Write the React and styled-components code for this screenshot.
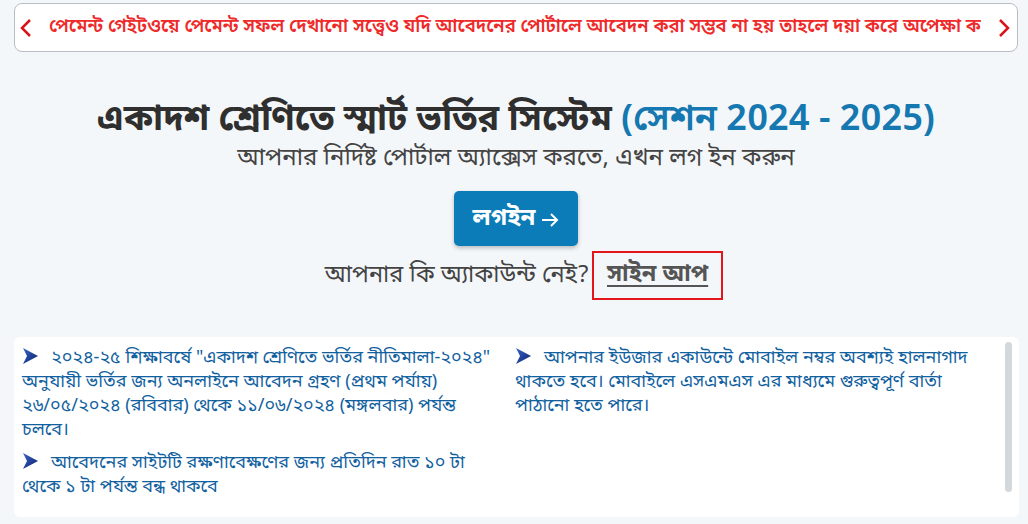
import React from "react";
import styled, { createGlobalStyle } from "styled-components";

const GlobalStyle = createGlobalStyle`
  * { box-sizing: border-box; }
  html, body { margin: 0; padding: 0; background: #f4f7fa; }
  body {
    font-family: "Noto Sans Bengali", "Noto Sans", "Open Sans", sans-serif;
    color: #333;
  }
`;

const Page = styled.div`
  width: 1028px;
  height: 524px;
  overflow: hidden;
  padding: 3px 10px 0 14px;
`;

const Ticker = styled.div`
  display: flex;
  align-items: center;
  height: 49px;
  border: 1px solid #b9bec4;
  border-radius: 8px;
  background: #fff;
  padding: 0 6px 0 4px;
  gap: 16px;
`;

const Chevron = styled.span`
  flex: none;
  display: flex;
  align-items: center;
`;

const TickerText = styled.div`
  flex: 1;
  overflow: hidden;
  white-space: nowrap;
  color: #ee2a2a;
  font-weight: 600;
  font-size: 18.5px;
`;

const Hero = styled.section`
  display: flex;
  flex-direction: column;
  align-items: center;
  padding-top: 46px;
`;

const Title = styled.h1`
  margin: 0;
  font-size: 36px;
  font-weight: 700;
  color: #2f2f2f;
  line-height: 46px;
  span { color: #1678b0; font-weight: 600; }
`;

const Subtitle = styled.p`
  margin: 0;
  font-size: 24px;
  color: #444;
  line-height: 30px;
`;

const LoginButton = styled.button`
  margin-top: 17px;
  width: 124px;
  height: 55px;
  border: none;
  border-radius: 5px;
  background: #0b7cb7;
  color: #fff;
  font-family: inherit;
  font-size: 24px;
  font-weight: 700;
  box-shadow: 0 2px 4px rgba(0, 0, 0, 0.25);
  display: flex;
  align-items: center;
  justify-content: center;
  gap: 6px;
  svg { margin-top: 2px; }
`;

const SignupLine = styled.div`
  margin-top: 5px;
  display: flex;
  align-items: center;
  font-size: 23.5px;
  color: #444;
  padding-left: 16px;
`;

const SignupLink = styled.a`
  margin-left: 3px;
  padding: 6px 13px 7px;
  border: 2px solid #e3161c;
  color: #555;
  font-weight: 700;
  text-decoration: underline;
  text-underline-offset: 4px;
`;

const NoticeCard = styled.div`
  margin-top: 37px;
  margin-right: -1px;
  height: 180px;
  background: #fff;
  border-radius: 6px;
  display: grid;
  grid-template-columns: 493px 1fr 14px;
  padding: 9px 0 0 8px;
`;

const Column = styled.div`
  padding-right: 14px;
`;

const Notice = styled.p`
  margin: 0 0 9px;
  font-size: 18px;
  line-height: 24px;
  color: #11619f;
  svg { vertical-align: -2px; margin-right: 12px; }
`;

const Scrollbar = styled.div`
  width: 7px;
  height: 150px;
  margin-top: -4px;
  border-radius: 4px;
  background: #d3d8dc;
  justify-self: start;
`;

function Arrow() {
  return (
    <svg width="17" height="18" viewBox="0 0 17 18">
      <defs>
        <linearGradient id="ag" x1="0" y1="0" x2="1" y2="1">
          <stop offset="0" stopColor="#3a66c9" />
          <stop offset="1" stopColor="#0b1f6b" />
        </linearGradient>
      </defs>
      <path d="M1 1 L16 9 L1 17 L5 9 Z" fill="url(#ag)" />
    </svg>
  );
}

export default function App() {
  return (
    <>
      <GlobalStyle />
      <Page>
        <Ticker>
          <Chevron>
            <svg width="14" height="20" viewBox="0 0 14 20"><path d="M11 2 L3 10 L11 18" stroke="#d8151b" strokeWidth="2.5" fill="none" /></svg>
          </Chevron>
          <TickerText>
            পেমেন্ট গেইটওয়ে পেমেন্ট সফল দেখানো সত্ত্বেও যদি আবেদনের পোর্টালে আবেদন করা সম্ভব না হয় তাহলে দয়া করে অপেক্ষা করুন
          </TickerText>
          <Chevron>
            <svg width="14" height="20" viewBox="0 0 14 20"><path d="M3 2 L11 10 L3 18" stroke="#d8151b" strokeWidth="2.5" fill="none" /></svg>
          </Chevron>
        </Ticker>

        <Hero>
          <Title>
            একাদশ শ্রেণিতে স্মার্ট ভর্তির সিস্টেম <span>(সেশন 2024 - 2025)</span>
          </Title>
          <Subtitle>আপনার নির্দিষ্ট পোর্টাল অ্যাক্সেস করতে, এখন লগ ইন করুন</Subtitle>
          <LoginButton>
            লগইন
            <svg width="18" height="16" viewBox="0 0 18 16"><path d="M1 8 H16 M10 2 L16 8 L10 14" stroke="#fff" strokeWidth="2" fill="none" /></svg>
          </LoginButton>
          <SignupLine>
            আপনার কি অ্যাকাউন্ট নেই? <SignupLink>সাইন আপ</SignupLink>
          </SignupLine>
        </Hero>

        <NoticeCard>
          <Column>
            <Notice>
              <Arrow />২০২৪-২৫ শিক্ষাবর্ষে "একাদশ শ্রেণিতে ভর্তির নীতিমালা-২০২৪" অনুযায়ী ভর্তির জন্য অনলাইনে আবেদন গ্রহণ (প্রথম পর্যায়) ২৬/০৫/২০২৪ (রবিবার) থেকে ১১/০৬/২০২৪ (মঙ্গলবার) পর্যন্ত চলবে।
            </Notice>
            <Notice>
              <Arrow />আবেদনের সাইটটি রক্ষণাবেক্ষণের জন্য প্রতিদিন রাত ১০ টা থেকে ১ টা পর্যন্ত বন্ধ থাকবে
            </Notice>
          </Column>
          <Column>
            <Notice>
              <Arrow />আপনার ইউজার একাউন্টে মোবাইল নম্বর অবশ্যই হালনাগাদ থাকতে হবে। মোবাইলে এসএমএস এর মাধ্যমে গুরুত্বপূর্ণ বার্তা পাঠানো হতে পারে।
            </Notice>
          </Column>
          <Scrollbar />
        </NoticeCard>
      </Page>
    </>
  );
}
